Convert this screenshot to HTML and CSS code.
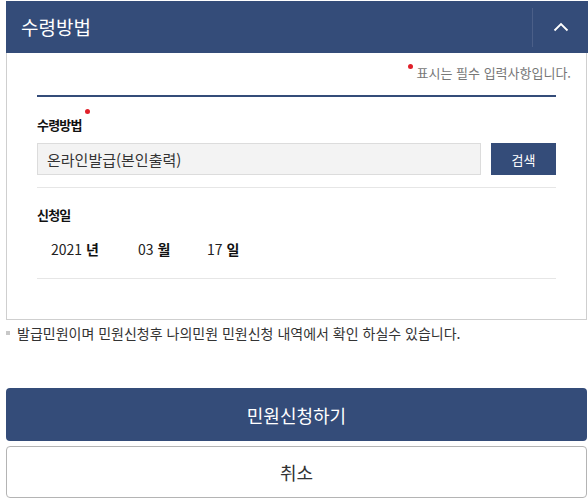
FILE: index.html
```html
<!DOCTYPE html>
<html lang="ko">
<head>
    <meta charset="UTF-8">
    <meta name="viewport" content="width=device-width, initial-scale=1.0">
    <title>수령방법</title>
    <link rel="stylesheet" href="styles.css">
</head>
<body>
    <div class="page">
        <div class="panel">
            <div class="panel-head">
                <h2>수령방법</h2>
                <button class="toggle" type="button" aria-label="접기">
                    <svg width="16" height="10" viewBox="0 0 16 10">
                        <path d="M1.5 8.5 L8 2 L14.5 8.5" fill="none" stroke="#fff" stroke-width="1.8"/>
                    </svg>
                </button>
            </div>
            <div class="panel-body">
                <p class="required-note"><span class="dot"></span>표시는 필수 입력사항입니다.</p>
                <div class="form">
                    <div class="row">
                        <label class="label">수령방법<span class="dot"></span></label>
                        <div class="field">
                            <input class="input" type="text" value="온라인발급(본인출력)" readonly>
                            <button class="btn-search" type="button">검색</button>
                        </div>
                    </div>
                    <div class="row row-date">
                        <label class="label">신청일</label>
                        <div class="date">
                            <span class="part">2021 <b>년</b></span>
                            <span class="part">03 <b>월</b></span>
                            <span class="part">17 <b>일</b></span>
                        </div>
                    </div>
                </div>
            </div>
        </div>
        <p class="info">발급민원이며 민원신청후 나의민원 민원신청 내역에서 확인 하실수 있습니다.</p>
        <div class="actions">
            <button class="btn btn-primary" type="button">민원신청하기</button>
            <button class="btn btn-cancel" type="button">취소</button>
        </div>
    </div>
</body>
</html>
```

FILE: styles.css
```css
*{
    margin:0;
    padding:0;
    box-sizing: border-box;
}

body{
    font-family: "Noto Sans CJK KR", "Noto Sans", sans-serif;
    line-height: 20px;
    color:#333;
    background:#fff;
}

.page{
    padding: 1px 1px 0 6px;
}

/* 패널 */
.panel-head{
    display: flex;
    align-items: center;
    height: 52px;
    margin-right: -1px;
    background-color: #344c79;
    color:#fff;
}

.panel-head h2{
    flex: 1;
    padding-left: 15px;
    font-size: 19px;
    font-weight: normal;
}

.toggle{
    width: 56px;
    height: 39px;
    border: 0;
    border-left: 1px solid #4b5f88;
    background: none;
    display: flex;
    align-items: center;
    justify-content: center;
    cursor: pointer;
}

.panel-body{
    border: 1px solid #cfcfcf;
    border-top: 0;
    padding: 10px 30px 40px 30px;
}

.required-note{
    text-align: right;
    font-size: 13px;
    color:#777;
    height: 32px;
    margin-right: -15px;
}

.dot{
    display: inline-block;
    width: 5px;
    height: 5px;
    border-radius: 50%;
    background-color: #e0202a;
    vertical-align: top;
    margin-right: 4px;
    margin-top: 1px;
}

.form{
    border-top: 2px solid #344c79;
}

.row{
    border-bottom: 1px solid #e6e6e6;
    padding: 18px 0 12px;
}

.label{
    display: block;
    font-size: 13px;
    font-weight: bold;
    color:#111;
    letter-spacing: -0.8px;
    height: 28px;
}

.label .dot{
    margin: -6px 0 0 3px;
}

.field{
    display: flex;
    gap: 10px;
}

.input{
    flex: 1;
    height: 32px;
    border: 1px solid #dcdcdc;
    background-color: #f3f3f3;
    padding: 0 9px;
    font-family: inherit;
    font-size: 15px;
    color:#333;
    outline: none;
}

.btn-search{
    width: 65px;
    height: 32px;
    border: 0;
    background-color: #344c79;
    color:#fff;
    font-family: inherit;
    font-size: 13px;
}

.row-date{
    padding: 17px 0 18px;
}

.row-date .label{
    height: 33px;
}

.date{
    display: flex;
    padding-left: 14px;
    font-size: 14px;
    color:#222;
    height: 22px;
    align-items: center;
}

.date .part{
    width: 87px;
}

.date .part + .part{
    width: 69px;
}

.date b{
    color:#111;
}

.info{
    position: relative;
    padding: 3px 0 0 11px;
    font-size: 14px;
    color:#333;
}

.info:before{
    content:"";
    position: absolute;
    left: 0;
    top: 11px;
    width: 4px;
    height: 4px;
    background-color: #c8c8c8;
}

/* 하단 버튼 */
.actions{
    display: flex;
    flex-direction: column;
    gap: 5px;
    margin-top: 45px;
}

.btn{
    height: 53px;
    border-radius: 4px;
    font-family: inherit;
    font-size: 18px;
    cursor: pointer;
}

.btn-primary{
    border: 0;
    background-color: #344c79;
    color:#fff;
}

.btn-cancel{
    height: 52px;
    border: 1px solid #b4b4b4;
    background-color: #fff;
    color:#333;
}
```
